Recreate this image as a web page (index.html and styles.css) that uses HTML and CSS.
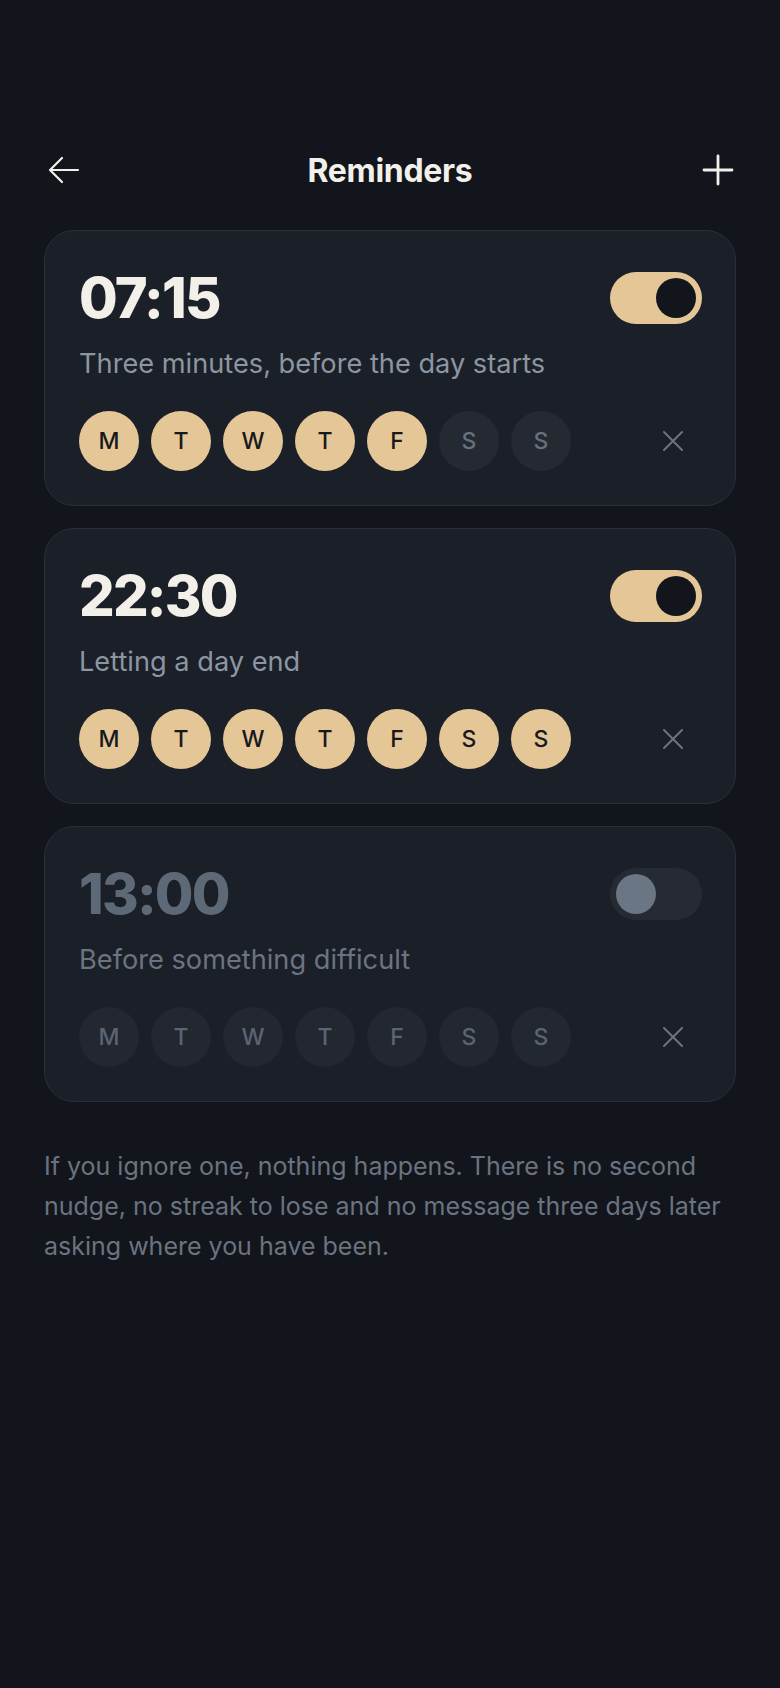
FILE: index.html
```html
<!DOCTYPE html>
<html>
    <head>
        <meta charset="utf-8">
        <link rel="stylesheet" href="styles.css">
    </head>
    <body>
        <div id="app">
            <div class="topbar">
                <div class="icon-btn back">
                    <svg width="34" height="30" viewBox="0 0 34 30" fill="none" stroke="#f3f0ea" stroke-width="2.2" stroke-linecap="round" stroke-linejoin="round"><path d="M31 15H3M15 3L3 15L15 27"/></svg>
                </div>
                <div class="title">Reminders</div>
                <div class="icon-btn add">
                    <svg width="32" height="32" viewBox="0 0 32 32" fill="none" stroke="#f3f0ea" stroke-width="2.8" stroke-linecap="round"><path d="M16 2V30M2 16H30"/></svg>
                </div>
            </div>

            <div class="reminder">
                <div class="row-top">
                    <div class="time">07:15</div>
                    <div class="toggle on"><span class="knob"></span></div>
                </div>
                <div class="label">Three minutes, before the day starts</div>
                <div class="row-days">
                    <div class="days">
                        <span class="day on">M</span>
                        <span class="day on">T</span>
                        <span class="day on">W</span>
                        <span class="day on">T</span>
                        <span class="day on">F</span>
                        <span class="day">S</span>
                        <span class="day">S</span>
                    </div>
                    <div class="remove">
                        <svg width="24" height="24" viewBox="0 0 24 24" fill="none" stroke="#6b7480" stroke-width="2" stroke-linecap="round"><path d="M3 3L21 21M21 3L3 21"/></svg>
                    </div>
                </div>
            </div>

            <div class="reminder">
                <div class="row-top">
                    <div class="time">22:30</div>
                    <div class="toggle on"><span class="knob"></span></div>
                </div>
                <div class="label">Letting a day end</div>
                <div class="row-days">
                    <div class="days">
                        <span class="day on">M</span>
                        <span class="day on">T</span>
                        <span class="day on">W</span>
                        <span class="day on">T</span>
                        <span class="day on">F</span>
                        <span class="day on">S</span>
                        <span class="day on">S</span>
                    </div>
                    <div class="remove">
                        <svg width="24" height="24" viewBox="0 0 24 24" fill="none" stroke="#6b7480" stroke-width="2" stroke-linecap="round"><path d="M3 3L21 21M21 3L3 21"/></svg>
                    </div>
                </div>
            </div>

            <div class="reminder off">
                <div class="row-top">
                    <div class="time">13:00</div>
                    <div class="toggle"><span class="knob"></span></div>
                </div>
                <div class="label">Before something difficult</div>
                <div class="row-days">
                    <div class="days">
                        <span class="day">M</span>
                        <span class="day">T</span>
                        <span class="day">W</span>
                        <span class="day">T</span>
                        <span class="day">F</span>
                        <span class="day">S</span>
                        <span class="day">S</span>
                    </div>
                    <div class="remove">
                        <svg width="24" height="24" viewBox="0 0 24 24" fill="none" stroke="#6b7480" stroke-width="2" stroke-linecap="round"><path d="M3 3L21 21M21 3L3 21"/></svg>
                    </div>
                </div>
            </div>

            <p class="note">If you ignore one, nothing happens. There is no second nudge, no streak to lose and no message three days later asking where you have been.</p>
        </div>
    </body>
</html>
```

FILE: styles.css
```css
html, body{
    margin:0;
    padding:0;
    background-color: #12151b;
}

body{
    font-family: Inter, "Noto Sans", sans-serif;
    color:#f3f0ea;
    min-height:1688px;
}

#app{
    padding: 150px 44px 0 44px;
}

.topbar{
    display: flex;
    align-items: center;
    justify-content: space-between;
    height: 40px;
    margin-bottom: 40px;
}

.icon-btn{
    width: 40px;
    height: 40px;
    display: flex;
    align-items: center;
}

.icon-btn.back{
    justify-content: flex-start;
    padding-left: 3px;
    box-sizing: border-box;
}

.icon-btn.add{
    justify-content: flex-end;
    padding-right: 2px;
    box-sizing: border-box;
}

.title{
    font-size: 32px;
    font-weight: 700;
    letter-spacing: -0.3px;
}

.reminder{
    background-color: #1b1f27;
    border: 1px solid #2a2f39;
    border-radius: 30px;
    padding: 41px 33px 34px 34px;
    margin-bottom: 22px;
}

.row-top{
    display: flex;
    align-items: center;
    justify-content: space-between;
    height: 52px;
}

.time{
    font-size: 56px;
    font-weight: 800;
    letter-spacing: -1.8px;
    line-height: 52px;
    color:#f3f0ea;
}

.toggle{
    width: 92px;
    height: 52px;
    border-radius: 26px;
    background-color: #252a33;
    box-sizing: border-box;
    padding: 6px;
    display: flex;
    justify-content: flex-start;
}

.toggle.on{
    background-color: #e5c797;
    justify-content: flex-end;
}

.knob{
    width: 40px;
    height: 40px;
    border-radius: 50%;
    background-color: #6b7684;
}

.toggle.on .knob{
    background-color: #12151b;
}

.label{
    margin-top: 24px;
    font-size: 27.2px;
    line-height: 32px;
    color:#8c96a3;
}

.row-days{
    margin-top: 31px;
    display: flex;
    align-items: center;
    justify-content: space-between;
}

.days{
    display: flex;
    gap: 12px;
}

.day{
    width: 60px;
    height: 60px;
    border-radius: 50%;
    background-color: #242932;
    color:#67707d;
    font-size: 23px;
    font-weight: 500;
    display: flex;
    align-items: center;
    justify-content: center;
}

.day.on{
    background-color: #e5c797;
    color:#17191e;
}

.remove{
    width: 40px;
    height: 40px;
    display: flex;
    align-items: center;
    justify-content: center;
    margin-right: 9px;
}

.reminder.off .time{
    color:#5e6977;
}

.reminder.off .label{
    color:#6b7480;
}

.reminder.off .day{
    background-color: #222730;
    color:#5b6471;
}

.note{
    margin: 44px 0 0 0;
    font-size: 25px;
    line-height: 40px;
    color:#6b7380;
}
```
